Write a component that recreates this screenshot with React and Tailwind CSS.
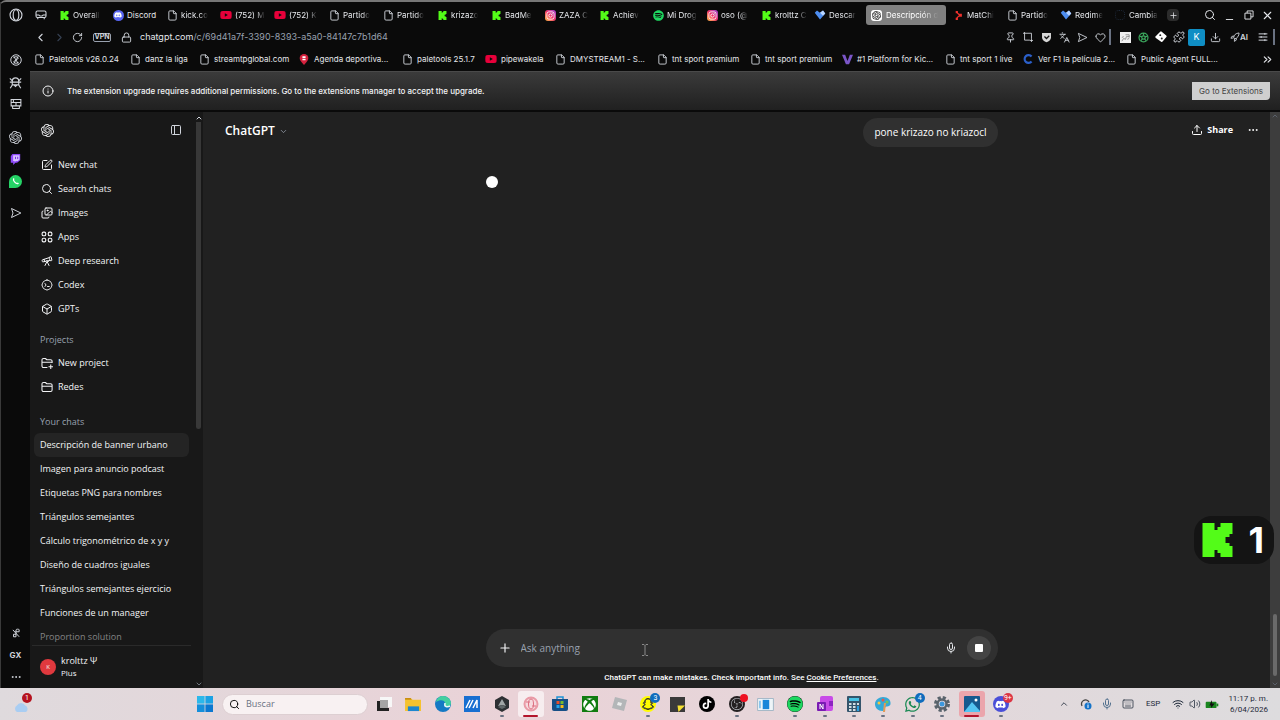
import React from "react";
import {
  Box,
  ChevronDown,
  ChevronLeft,
  ChevronRight,
  ChevronsRight,
  ChevronUp,
  Download,
  Ellipsis,
  File,
  Heart,
  Images,
  Info,
  Keyboard,
  Languages,
  Lock,
  Mic,
  Minus,
  PanelLeft,
  Pin,
  Plus,
  Puzzle,
  RotateCw,
  Search,
  SquarePen,
  Telescope,
  Upload,
  Volume2,
  Wifi,
  X,
} from "lucide-react";
import {
  FaDiscord,
  FaInstagram,
  FaSnapchat,
  FaSpotify,
  FaTiktok,
  FaWhatsapp,
  FaXbox,
  FaYoutube,
} from "react-icons/fa6";
import { SiObsstudio, SiOpenai } from "react-icons/si";

/* ---------- small drawings ---------- */

const KickMark = ({ className }) => (
  <svg viewBox="0 0 30 34" className={className} fill="#53fc18" aria-hidden="true">
    <path d="M0 0h12v7h3V4h3V0h12v11h-3v3h-4v6h4v3h3v11H18v-4h-3v-3h-3v7H0z" />
  </svg>
);

const OperaMark = ({ className }) => (
  <svg viewBox="0 0 16 16" className={className} fill="none" stroke="currentColor" aria-hidden="true">
    <circle cx="8" cy="8" r="6.8" strokeWidth="1.3" />
    <ellipse cx="8" cy="8" rx="3.2" ry="6" strokeWidth="1.3" />
  </svg>
);

const PlayTriangle = ({ className }) => (
  <svg viewBox="0 0 16 16" className={className} fill="none" stroke="currentColor" strokeWidth="1.3" strokeLinejoin="round" aria-hidden="true">
    <path d="M2 2l12.500 6L2 14l2-6z" />
  </svg>
);

const RocketIcon = ({ className }) => (
  <svg viewBox="0 0 16 16" className={className} fill="none" stroke="currentColor" strokeWidth="1.400" aria-hidden="true">
    <path d="M6 9c0-4 3-7 8.500-7.500C14.500 6 12 10 7.500 11zM6.500 6.500L3 7 1.500 10l4-.5M10 10v3l-3 2 .2-4" />
  </svg>
);

const RestoreIcon = ({ className }) => (
  <svg viewBox="0 0 16 16" className={className} fill="none" stroke="currentColor" strokeWidth="1.500" aria-hidden="true">
    <path d="M5 5V1.500h9.500V11H11M1.500 5H11v9.500H1.500z" />
  </svg>
);

const BlueDiamond = ({ className }) => (
  <svg viewBox="0 0 16 16" className={className} aria-hidden="true">
    <path d="M1 5l3-3 4 3 4-3 3 4-7 8z" fill="#4d8df0" />
    <path d="M8 5l4-3 3 4-3 3z" fill="#b9d5ff" />
  </svg>
);

const RedArrows = ({ className }) => (
  <svg viewBox="0 0 16 16" className={className} fill="#f0302c" aria-hidden="true">
    <path d="M3 0h4v4H3zM9 5h5v5H9zM3 12h4v4H3zM7 3l4 3-2 2-4-4zM10 9l-4 4-2-1 4-4z" />
  </svg>
);

const TwitchMark = ({ className }) => (
  <svg viewBox="0 0 14 14" className={className} aria-hidden="true">
    <path d="M3 0h10v8l-4 3H7l-3 3v-3H1V3z" fill="#8d49f7" />
    <path d="M4 1.500h8V7l-2 2H7.500L6 10.500V9H4z" fill="#d9c2ff" />
    <path d="M7 3.500v3M9.800 3.500v3" stroke="#6d2be0" strokeWidth="1.200" />
  </svg>
);

const RobotIcon = ({ className }) => (
  <svg viewBox="0 0 16 16" className={className} fill="none" stroke="currentColor" strokeWidth="1.4" aria-hidden="true">
    <path d="M4 6.500C4 1 12 1 12 6.500V11H4zM1 3l3 3M15 3l-3 3M1 7.500h14M4 11l-2.500 4M12 11l2.500 4M6 11l2 2 2-2" />
  </svg>
);

const PanelsIcon = ({ className }) => (
  <svg viewBox="0 0 16 16" className={className} fill="none" stroke="currentColor" strokeWidth="1.4" aria-hidden="true">
    <path d="M1.500 2h13v8.500h-13zM1.500 6h13M8 6v4.500M4.500 6V2M3 14h10M3.500 10.500V14M12.500 10.500V14" />
  </svg>
);

const SwirlIcon = ({ className }) => (
  <svg viewBox="0 0 16 16" className={className} fill="none" stroke="currentColor" strokeWidth="1.3" aria-hidden="true">
    <circle cx="8" cy="8" r="7" />
    <path d="M4.500 5.500C5 3 11 3 11 5.500c0 2-6 3-6 5 0 2.500 6 2.500 6.500 0M5 3l6 10M11 3L5 13" />
  </svg>
);

const ShortsIcon = ({ className }) => (
  <svg viewBox="0 0 16 16" className={className} fill="none" stroke="currentColor" strokeWidth="1.600" aria-hidden="true">
    <path d="M3 3l10 11M8 14V3c0-1 5-2 5 0v3H7M8 10H4v4h4" />
  </svg>
);

const TabsIcon = ({ className }) => (
  <svg viewBox="0 0 16 14" className={className} fill="none" stroke="currentColor" strokeWidth="1.500" aria-hidden="true">
    <rect x="1" y="1.500" width="14" height="9" rx="2" />
    <path d="M1 7h4l1.500 1.500h3L11 7h4M3.500 10.500V13M12.500 10.500V13" />
  </svg>
);

const AppsIcon = ({ className }) => (
  <svg viewBox="0 0 16 16" className={className} fill="none" stroke="currentColor" strokeWidth="1.500" aria-hidden="true">
    <rect x="1.500" y="1.500" width="4.800" height="4.800" rx="1.800" />
    <rect x="9.700" y="1.500" width="4.800" height="4.800" rx="1.800" />
    <rect x="1.500" y="9.700" width="4.800" height="4.800" rx="1.800" />
    <rect x="9.700" y="9.700" width="4.800" height="4.800" rx="1.800" />
  </svg>
);

const FolderIcon = ({ className }) => (
  <svg viewBox="0 0 16 16" className={className} fill="none" stroke="currentColor" strokeWidth="1.400" strokeLinejoin="round" aria-hidden="true">
    <path d="M1.300 12V4a2 2 0 0 1 2-2h2.500l2 1.700h5a2 2 0 0 1 2 2V12a2 2 0 0 1-2 2H3.300a2 2 0 0 1-2-2zM1.300 7h13.500" />
  </svg>
);

const NewFolderIcon = ({ className }) => (
  <svg viewBox="0 0 16 16" className={className} fill="none" stroke="currentColor" strokeWidth="1.400" strokeLinejoin="round" aria-hidden="true">
    <path d="M8.500 14H3.300a2 2 0 0 1-2-2V4a2 2 0 0 1 2-2h2.500l2 1.700h5a2 2 0 0 1 2 2V8M1.300 7h13.500M13 10v6M10 13h6" />
  </svg>
);

const CodexIcon = ({ className }) => (
  <svg viewBox="0 0 16 16" className={className} fill="none" stroke="currentColor" strokeWidth="1.300" strokeLinecap="round" aria-hidden="true">
    <path d="M8 1.300c1.300 0 2 .9 3 1.200 1.300.4 2.300 1.200 2.600 2.500.2 1 1.100 1.700 1.100 3s-.9 2-1.100 3c-.3 1.300-1.300 2.100-2.600 2.500-1 .3-1.700 1.200-3 1.200s-2-.9-3-1.200C3.700 13.100 2.700 12.300 2.400 11 2.200 10 1.300 9.300 1.300 8s.9-2 1.100-3C2.700 3.700 3.700 2.900 5 2.500c1-.3 1.700-1.200 3-1.200z" />
    <path d="M5.300 6l1.500 2-1.500 2M8.700 10h2.300" />
  </svg>
);

const SnapshotIcon = ({ className }) => (
  <svg viewBox="0 0 16 16" className={className} fill="none" stroke="currentColor" strokeWidth="1.400" aria-hidden="true">
    <path d="M0 2h13.500v9M2.500 0v13H11M13.500 11v5M11 13.500h5" />
  </svg>
);

const ShieldCheck = ({ className }) => (
  <svg viewBox="0 0 16 16" className={className} aria-hidden="true">
    <path d="M1.500 1.500h13V8c0 3.500-3 5.500-6.500 7C4.500 13.500 1.500 11.500 1.500 8z" fill="#d8d8d8" />
    <path d="M5 6.500l3 3 4-4" stroke="#111" strokeWidth="1.800" fill="none" />
  </svg>
);

const SetupIcon = ({ className }) => (
  <svg viewBox="0 0 16 16" className={className} fill="none" stroke="currentColor" strokeWidth="1.600" aria-hidden="true">
    <path d="M1 3h14M1 8h14M1 13h14M11 1.500v3M5 6.500v3M11 11.500v3" />
  </svg>
);

/* ---------- browser chrome ---------- */

const favicons = {
  kick: <KickMark className="size-[9px]" />,
  discord: (
    <span className="flex size-[11px] items-center justify-center rounded-full bg-[#5865f2]">
      <FaDiscord className="size-2 text-white" />
    </span>
  ),
  file: <File className="size-[11px] text-gray-300" />,
  youtube: <FaYoutube className="size-3 text-[#e8003a]" />,
  instagram: (
    <span className="flex size-[11px] items-center justify-center rounded-[3px] bg-linear-to-tr from-[#fdb73c] via-[#f0316b] to-[#9b36d6]">
      <FaInstagram className="size-[9px] text-white" />
    </span>
  ),
  spotify: <FaSpotify className="size-[11px] text-[#1ed760]" />,
  diamond: <BlueDiamond className="size-3" />,
  openai: (
    <span className="flex size-[11px] items-center justify-center rounded-[3px] bg-white">
      <SiOpenai className="size-[9px] text-black" />
    </span>
  ),
  red: <RedArrows className="size-[9px]" />,
  faint: <span className="size-[10px] rounded-sm border border-dotted border-gray-800" />,
  pin: (
    <svg viewBox="0 0 12 14" className="h-[11px] w-[10px]">
      <path d="M6 14C2 9.500.5 7.500.5 5a5.500 5 0 0 1 11 0c0 2.500-1.500 4.500-5.500 9z" fill="#d4213d" />
      <path d="M4 3h4v2H4zM4 6h4v2H4z" fill="#fff" />
    </svg>
  ),
  violet: (
    <svg viewBox="0 0 14 14" className="size-[11px]">
      <path d="M0 1h4l3 8 3-8h4L9 13H5z" fill="#7a55c7" />
    </svg>
  ),
  blueC: (
    <svg viewBox="0 0 14 14" className="size-[10px]" fill="none">
      <path d="M12 3.500A5.500 5.500 0 1 0 12 10.500" stroke="#2b5fc9" strokeWidth="3" />
    </svg>
  ),
};

const tabs = [
  { icon: "kick", title: "Overall" },
  { icon: "discord", title: "Discord", whole: true },
  { icon: "file", title: "kick.co" },
  { icon: "youtube", title: "(752) M" },
  { icon: "youtube", title: "(752) K" },
  { icon: "file", title: "Partido" },
  { icon: "file", title: "Partido" },
  { icon: "kick", title: "krizazo" },
  { icon: "kick", title: "BadMe" },
  { icon: "instagram", title: "ZAZA C" },
  { icon: "kick", title: "Achiev" },
  { icon: "spotify", title: "Mi Drog" },
  { icon: "instagram", title: "oso (@" },
  { icon: "kick", title: "krolttz C" },
  { icon: "diamond", title: "Descar" },
  { icon: "openai", title: "Descripción d", active: true },
  { icon: "red", title: "MatChi" },
  { icon: "file", title: "Partido" },
  { icon: "diamond", title: "Redime" },
  { icon: "faint", title: "Cambia" },
];

const bookmarks = [
  { icon: "file", title: "Paletools v26.0.24", width: "w-24" },
  { icon: "file", title: "danz la liga", width: "w-[69px]" },
  { icon: "file", title: "streamtpglobal.com", width: "w-[100px]" },
  { icon: "pin", title: "Agenda deportiva...", width: "w-[103px]" },
  { icon: "file", title: "paletools 25.1.7", width: "w-[84px]" },
  { icon: "youtube", title: "pipewakela", width: "w-[69px]" },
  { icon: "file", title: "DMYSTREAM1 - S...", width: "w-[102px]" },
  { icon: "file", title: "tnt sport premium", width: "w-[93px]" },
  { icon: "file", title: "tnt sport premium", width: "w-[92px]" },
  { icon: "violet", title: "#1 Platform for Kic...", width: "w-[103px]" },
  { icon: "file", title: "tnt sport 1 live", width: "w-[78px]" },
  { icon: "blueC", title: "Ver F1 la película 2...", width: "w-[103px]" },
  { icon: "file", title: "Public Agent FULL...", width: "w-[103px]" },
];

const IconButton = ({ label, className = "w-[18px]", children }) => (
  <button aria-label={label} className={`flex h-5 shrink-0 items-center justify-center ${className}`}>
    {children}
  </button>
);

const TabStrip = () => (
  <div className="flex h-[22px] items-center text-[8px] text-gray-200">
    <IconButton label="Workspace" className="w-[26px]">
      <TabsIcon className="mr-1 h-[10px] w-3 text-gray-300" />
    </IconButton>
    {tabs.map((tab, i) => (
      <button
        key={i}
        className={`flex h-5 items-center text-left ${
          tab.active ? "mr-1 w-20 gap-1 rounded-[3px] bg-[#808080] px-1 text-white" : "w-[54px] gap-[3px] pl-[2px]"
        }`}
      >
        <span className="flex w-3 shrink-0 items-center justify-center">{favicons[tab.icon]}</span>
        <span className={`whitespace-nowrap ${tab.whole ? "" : "mask-r-from-70%"}`}>{tab.title}</span>
      </button>
    ))}
    <IconButton label="New tab" className="w-[14px]">
      <span className="flex size-3 items-center justify-center rounded-sm bg-[#2c2c2c]">
        <Plus className="size-[9px]" />
      </span>
    </IconButton>
    <div className="ml-auto flex items-center pr-1">
      <IconButton label="Search tabs" className="w-5">
        <Search className="size-3" />
      </IconButton>
      <IconButton label="Minimize" className="w-[19px]">
        <Minus className="mt-2 size-[11px]" />
      </IconButton>
      <IconButton label="Restore" className="w-[19px]">
        <RestoreIcon className="size-[10px]" />
      </IconButton>
      <IconButton label="Close" className="w-[18px]">
        <X className="size-[13px]" />
      </IconButton>
    </div>
  </div>
);

const AddressBar = () => (
  <div className="flex h-[22px] items-center text-gray-300">
    <IconButton label="Back" className="w-5">
      <ChevronLeft className="size-[13px]" />
    </IconButton>
    <IconButton label="Forward">
      <ChevronRight className="size-[13px] text-gray-700" />
    </IconButton>
    <IconButton label="Reload">
      <RotateCw className="size-[11px]" />
    </IconButton>
    <span className="ml-[7px] flex h-[9px] w-[18px] items-center justify-center rounded-[2px] border border-gray-400 text-[7px] font-bold text-gray-300">
      VPN
    </span>
    <Lock className="mr-2 ml-[10px] size-[11px]" />
    <span className="text-[9px] text-gray-400">
      <span className="text-gray-200">chatgpt.com</span>/c/69d41a7f-3390-8393-a5a0-84147c7b1d64
    </span>
    <div className="ml-auto flex items-center">
      <IconButton label="Pin page">
        <Pin className="size-[11px]" />
      </IconButton>
      <IconButton label="Snapshot">
        <SnapshotIcon className="size-[10px]" />
      </IconButton>
      <IconButton label="Ad blocker">
        <ShieldCheck className="size-[11px]" />
      </IconButton>
      <IconButton label="Translate">
        <Languages className="size-[11px]" />
      </IconButton>
      <IconButton label="Player">
        <PlayTriangle className="size-[11px]" />
      </IconButton>
      <IconButton label="Favorites">
        <Heart className="size-[11px]" />
      </IconButton>
      <span className="mr-[5px] h-4 w-[2px] bg-gray-500" />
      <IconButton label="Image extension">
        <svg viewBox="0 0 12 12" className="size-[11px]">
          <path d="M0 0h12v12H0z" fill="#f1f1f1" />
          <path d="M2 10l2-3 2 1 1-3 3 0M6 3h4v3M2 6l2-1M8 8l2-1" stroke="#777" strokeWidth=".8" fill="none" />
        </svg>
      </IconButton>
      <IconButton label="Wheel extension">
        <svg viewBox="0 0 16 16" className="size-[11px]" fill="none" stroke="#3ba55c" strokeWidth="1.800">
          <circle cx="8" cy="8" r="6.500" />
          <circle cx="8" cy="8" r="2.500" />
          <path d="M8 1.500v4M14 6l-4 1M12 13l-2.500-3M4 13l2.500-3M2 6l4 1" />
        </svg>
      </IconButton>
      <IconButton label="Dice extension">
        <svg viewBox="0 0 16 16" className="size-3">
          <path d="M8 2l6 5-5 6-7-5z" fill="#fff" stroke="#fff" strokeWidth="3" strokeLinejoin="round" />
          <circle cx="7" cy="5.500" r="1.300" fill="#222" />
          <circle cx="9" cy="10" r="1.300" fill="#222" />
        </svg>
      </IconButton>
      <IconButton label="Extensions">
        <Puzzle className="size-3" />
      </IconButton>
      <button className="flex size-[17px] items-center justify-center rounded-[2px] bg-[#0f8ec4] text-[9px] text-white">
        K
      </button>
      <IconButton label="Downloads" className="w-5">
        <Download className="size-[11px]" />
      </IconButton>
      <button className="flex w-7 items-center justify-center text-[8px] leading-none font-semibold">
        <RocketIcon className="size-[10px]" />
        AI
      </button>
      <IconButton label="Easy setup" className="w-5">
        <SetupIcon className="size-[10px]" />
      </IconButton>
      <span className="mr-[5px] h-4 w-[2px] bg-gray-500" />
    </div>
  </div>
);

const BookmarksBar = () => (
  <nav className="flex h-[22px] items-center pr-[6px] text-[8px] text-gray-200">
    {bookmarks.map((b, i) => (
      <a key={i} href="#" className={`flex shrink-0 items-center gap-1 pl-[3px] whitespace-nowrap ${b.width}`}>
        <span className="flex w-3 shrink-0 justify-center">{favicons[b.icon]}</span>
        {b.title}
      </a>
    ))}
    <button aria-label="More bookmarks" className="ml-auto">
      <ChevronsRight className="size-[13px]" />
    </button>
  </nav>
);

const InfoBar = () => (
  <div className="mt-[1px] flex h-[39px] shrink-0 items-center border-t border-[#4a4a4a] bg-linear-to-b from-[#3b3b3b] to-[#202020] pr-[10px] pl-3 text-[8px] font-medium text-gray-100">
    <Info className="mr-[13px] size-3" />
    <span>
      The extension upgrade requires additional permissions. Go to the extensions manager to accept the upgrade.
    </span>
    <button className="ml-auto h-[18px] w-[78px] rounded-br-sm bg-[#cfcfcf] font-normal text-[#444]">
      Go to Extensions
    </button>
  </div>
);

const RailButton = ({ label, className = "", children }) => (
  <button aria-label={label} className={`flex h-[22px] w-full shrink-0 items-center justify-center ${className}`}>
    {children}
  </button>
);

const Rail = () => (
  <aside className="flex w-[30px] shrink-0 flex-col border-l border-[#3a3a3a] pt-[2px] text-gray-300">
    <RailButton label="Opera menu" className="mb-[23px]">
      <OperaMark className="size-[14px]" />
    </RailButton>
    <RailButton label="Aria">
      <SwirlIcon className="size-3" />
    </RailButton>
    <RailButton label="Mods">
      <RobotIcon className="size-[13px]" />
    </RailButton>
    <RailButton label="Panels" className="mb-[11px]">
      <PanelsIcon className="size-3" />
    </RailButton>
    <RailButton label="ChatGPT">
      <SiOpenai className="size-[13px]" />
    </RailButton>
    <RailButton label="Twitch">
      <TwitchMark className="size-[11px]" />
    </RailButton>
    <RailButton label="WhatsApp" className="mb-[10px]">
      <span className="flex size-[13px] items-center justify-center rounded-full rounded-bl-sm bg-[#25d366]">
        <svg viewBox="0 0 12 12" className="size-[9px]" fill="none" stroke="#fff" strokeWidth="1.800" strokeLinecap="round">
          <path d="M3.500 2.500C2.500 5 6.500 9.500 9.500 8.500" />
        </svg>
      </span>
    </RailButton>
    <RailButton label="Player">
      <PlayTriangle className="size-3" />
    </RailButton>
    <RailButton label="Shorts" className="mt-auto">
      <ShortsIcon className="size-[10px]" />
    </RailButton>
    <RailButton label="GX" className="text-[8px] font-bold">
      GX
    </RailButton>
    <RailButton label="More">
      <Ellipsis className="size-3" />
    </RailButton>
  </aside>
);

/* ---------- ChatGPT page ---------- */

const navItems = [
  { icon: SquarePen, label: "New chat" },
  { icon: Search, label: "Search chats" },
  { icon: Images, label: "Images" },
  { icon: AppsIcon, label: "Apps" },
  { icon: Telescope, label: "Deep research" },
  { icon: CodexIcon, label: "Codex" },
  { icon: Box, label: "GPTs" },
];

const projects = [
  { icon: NewFolderIcon, label: "New project" },
  { icon: FolderIcon, label: "Redes" },
];

const chats = [
  "Descripción de banner urbano",
  "Imagen para anuncio podcast",
  "Etiquetas PNG para nombres",
  "Triángulos semejantes",
  "Cálculo trigonométrico de x y y",
  "Diseño de cuadros iguales",
  "Triángulos semejantes ejercicio",
  "Funciones de un manager",
  "Proportion solution",
];

const NavLink = ({ icon: Icon, label }) => (
  <a href="#" className="flex h-6 items-center gap-[5px] pl-[11px]">
    <Icon className="size-3" />
    {label}
  </a>
);

const Sidebar = () => (
  <aside className="flex w-[173px] shrink-0 bg-[#181818] font-['Open_Sans','Noto_Sans',sans-serif] text-[9px] font-medium text-gray-100">
    <div className="flex min-w-0 flex-1 flex-col">
      <div className="mb-[5px] flex h-9 shrink-0 items-center justify-between pr-3 pl-[11px]">
        <SiOpenai className="size-[13px]" />
        <button aria-label="Close sidebar">
          <PanelLeft className="size-3 text-gray-300" />
        </button>
      </div>
      <div className="min-h-0 flex-1 overflow-hidden">
        <nav>
          {navItems.map((item) => (
            <NavLink key={item.label} {...item} />
          ))}
        </nav>
        <h2 className="mt-2 flex h-[22px] items-center pl-[10px] text-gray-400">Projects</h2>
        {projects.map((item) => (
          <NavLink key={item.label} {...item} />
        ))}
        <h2 className="mt-3 flex h-[22px] items-center pl-[10px] text-gray-400">Your chats</h2>
        {chats.map((chat, i) => (
          <a
            key={chat}
            href="#"
            className={`mr-[5px] ml-1 flex h-6 items-center rounded-md pl-[6px] whitespace-nowrap ${
              i === 0 ? "bg-[#242424]" : ""
            } ${i === chats.length - 1 ? "text-[#858585]" : ""}`}
          >
            {chat}
          </a>
        ))}
      </div>
      <button className="mr-[3px] ml-[2px] flex h-[43px] shrink-0 items-center gap-[5px] border-t border-[#2a2a2a] pl-2 text-left">
        <span className="flex size-4 items-center justify-center rounded-full bg-[#e0393e] text-[6px]">K</span>
        <span className="leading-3">
          krolttz Ψ
          <span className="block text-[8px]">Plus</span>
        </span>
      </button>
    </div>
    <div className="flex w-[9px] flex-col items-center justify-between text-gray-300">
      <ChevronUp className="mt-[2px] size-2 shrink-0" strokeWidth={3} />
      <div className="w-[5px] flex-1">
        <div className="h-[55%] rounded-b-sm bg-[#383838]" />
      </div>
      <ChevronDown className="size-2 shrink-0 text-gray-400" />
    </div>
  </aside>
);

const Composer = () => (
  <form className="flex h-[38px] items-center rounded-full bg-[#303030] pr-[7px] pl-3" onSubmit={(e) => e.preventDefault()}>
    <button type="button" aria-label="Add files" className="mr-[9px]">
      <Plus className="size-[14px] text-gray-100" />
    </button>
    <input
      aria-label="Ask anything"
      placeholder="Ask anything"
      className="min-w-0 flex-1 text-[10px] outline-none placeholder:text-gray-400"
    />
    <button type="button" aria-label="Dictate" className="mr-[10px]">
      <Mic className="size-3 text-gray-200" />
    </button>
    <button type="button" aria-label="Stop" className="flex size-6 items-center justify-center rounded-full bg-[#444]">
      <span className="size-2 rounded-[1px] bg-white" />
    </button>
  </form>
);

const Chat = () => (
  <main className="relative flex min-w-0 flex-1 bg-[#212121] font-['Open_Sans','Noto_Sans',sans-serif] text-white">
    <div className="flex min-w-0 flex-1 flex-col pl-[10px]">
      <div className="grid grid-cols-[1fr_512px_1fr] items-start">
        <button className="flex h-[38px] items-center gap-1 pl-3 text-[12px] font-semibold">
          ChatGPT
          <ChevronDown className="size-[9px] text-gray-400" />
        </button>
        <div className="mt-[6px] flex justify-end">
          <p className="flex h-[29px] items-center rounded-full bg-[#303030] px-[11px] text-[10px] whitespace-nowrap">
            pone krizazo no kriazocl
          </p>
        </div>
        <div className="flex h-9 items-center justify-end gap-[14px] pr-[11px]">
          <button className="flex items-center gap-1 text-[9px] font-bold">
            <Upload className="size-3" />
            Share
          </button>
          <button aria-label="More options">
            <Ellipsis className="size-3" />
          </button>
        </div>
      </div>
      <div className="mx-auto flex w-[512px] flex-1 flex-col">
        <span className="mt-[26px] size-3 rounded-full bg-white" />
        <div className="mt-auto">
          <Composer />
          <p className="flex h-[21px] items-center justify-center font-['Roboto',sans-serif] text-[8px] font-medium whitespace-pre">
            ChatGPT can make mistakes. Check important info. See{" "}
            <a href="#" className="underline">Cookie Preferences</a>.
          </p>
        </div>
      </div>
    </div>
    <div className="flex w-[10px] flex-col items-center justify-between bg-[#3d3d3d] text-gray-500">
      <ChevronUp className="size-2 shrink-0" />
      <div className="flex w-1 flex-1 flex-col justify-end">
        <div className="mb-1 h-[62px] rounded-sm bg-[#6a6a6a]" />
      </div>
      <ChevronDown className="size-2 shrink-0" />
    </div>

    {/* viewer counter floating over the page */}
    <div className="absolute right-[6px] bottom-[124px] flex h-12 w-20 items-center justify-between rounded-[18px] bg-[#141414] pr-[10px] pl-2 font-['Inter',sans-serif] text-[36px] leading-none font-bold">
      <KickMark className="h-[34px] w-[31px]" />
      1
    </div>

    {/* text pointer */}
    <svg viewBox="0 0 8 12" className="absolute bottom-[32px] left-[438px] h-3 w-2" fill="none" stroke="#8a8a8a" aria-hidden="true">
      <path d="M1 .5h2l1 1 1-1h2M4 1.500v9M1 11.500h2l1-1 1 1h2" />
    </svg>
  </main>
);

/* ---------- Windows taskbar ---------- */

const WindowsLogo = () => (
  <svg viewBox="0 0 16 16" className="size-4">
    <path d="M0 0h7.600v7.600H0z" fill="#2cb8ea" />
    <path d="M8.400 0H16v7.600H8.400z" fill="#1ba2e4" />
    <path d="M0 8.400h7.600V16H0z" fill="#148fdb" />
    <path d="M8.400 8.400H16V16H8.400z" fill="#0b78d0" />
  </svg>
);

const taskIcons = [
  {
    name: "Task view",
    icon: (
      <svg viewBox="0 0 16 16" className="size-4">
        <path d="M4 1h12v10H4z" fill="#f7f7f7" />
        <path d="M1 5h3v7h9v3H1z" fill="#222" />
        <path d="M4 4h8v8H4z" fill="#a5a5a5" />
      </svg>
    ),
  },
  {
    name: "File Explorer",
    icon: (
      <svg viewBox="0 0 18 16" className="h-[15px] w-[17px]">
        <path d="M0 1h6l2 2h9v12H0z" fill="#f5c22f" />
        <path d="M0 1h6l1 2H0z" fill="#c98f12" />
        <path d="M3 10h12v5H3z" fill="#1d86cf" />
      </svg>
    ),
  },
  {
    name: "Edge",
    icon: (
      <svg viewBox="0 0 16 16" className="size-4">
        <circle cx="8" cy="8" r="8" fill="#1479c4" />
        <path d="M1 6C2 1 6 0 8 0c5 0 8 4 8 7 0 3-3 4-5 3-2 0-1-2-1-3 0-3-5-4-9-1z" fill="#43cfa0" />
        <path d="M10 7c0 1-1 3 1 3.500 2 .5 3 0 4-.5" stroke="#e8f7f8" strokeWidth="1.500" fill="none" />
      </svg>
    ),
  },
  {
    name: "MyASUS",
    icon: (
      <svg viewBox="0 0 16 16" className="size-4">
        <path d="M0 0h16v16H0z" fill="#176fd1" />
        <path d="M2 12l4-8M5 12l4-8M9 12l4-8v8" stroke="#fff" strokeWidth="1.500" fill="none" />
      </svg>
    ),
  },
  {
    name: "Armoury Crate",
    running: true,
    icon: (
      <svg viewBox="0 0 16 16" className="size-4">
        <path d="M8 0l7 4v8l-7 4-7-4V4z" fill="#2d3033" />
        <path d="M8 3l4 7-4-1-4 1z" fill="#9fa5a6" />
        <path d="M4 11l4-2 4 2-4 2z" fill="#5f6668" />
      </svg>
    ),
  },
  {
    name: "Opera GX",
    focused: "bg-white/60",
    icon: (
      <svg viewBox="0 0 16 16" className="size-4" fill="none">
        <circle cx="8" cy="8" r="6.500" fill="#f7d9de" stroke="#e99aa6" strokeWidth="2" />
        <ellipse cx="8" cy="8" rx="2.500" ry="5" stroke="#dd6f80" />
        <path d="M3 6h4M9 10h4" stroke="#dd6f80" />
      </svg>
    ),
  },
  {
    name: "Microsoft Store",
    icon: (
      <svg viewBox="0 0 16 16" className="size-4">
        <path d="M5 4V1h6v3" stroke="#1c93d6" strokeWidth="1.500" fill="none" />
        <path d="M0 3h16v10a2 2 0 0 1-2 2H2a2 2 0 0 1-2-2z" fill="#164f86" />
        <path d="M4.500 5h3v3h-3z" fill="#e84f2b" />
        <path d="M8.500 5h3v3h-3z" fill="#79b92c" />
        <path d="M4.500 9h3v3h-3z" fill="#22a6ed" />
        <path d="M8.500 9h3v3h-3z" fill="#f8bb17" />
      </svg>
    ),
  },
  {
    name: "Xbox",
    icon: (
      <span className="flex size-4 items-center justify-center bg-[#107c10]">
        <FaXbox className="size-[13px] text-white" />
      </span>
    ),
  },
  {
    name: "Roblox",
    icon: (
      <svg viewBox="0 0 16 16" className="size-4">
        <path d="M4 1l12 3-3 11L1 12z" fill="#b3b6b8" />
        <path d="M7 6l4 1-1 3-4-1z" fill="#eceded" />
      </svg>
    ),
  },
  {
    name: "Snapchat",
    running: true,
    badge: "3",
    icon: (
      <span className="flex size-4 items-center justify-center rounded-full bg-[#fffc00]">
        <FaSnapchat className="size-3 text-white [stroke:#000] [stroke-width:30]" />
      </span>
    ),
  },
  {
    name: "Sticky Notes",
    icon: (
      <svg viewBox="0 0 16 16" className="size-[15px]">
        <path d="M0 0h16v16H0z" fill="#3a3a3a" />
        <path d="M8 9h8l-7 7z" fill="#f6e132" />
      </svg>
    ),
  },
  {
    name: "TikTok",
    icon: (
      <span className="flex size-4 items-center justify-center rounded-full bg-black">
        <FaTiktok className="size-[10px] text-white" />
      </span>
    ),
  },
  {
    name: "OBS Studio",
    running: true,
    dot: true,
    icon: (
      <span className="flex size-4 items-center justify-center rounded-full bg-[#231f20]">
        <SiObsstudio className="size-3 text-gray-300" />
      </span>
    ),
  },
  {
    name: "Emulator",
    icon: (
      <svg viewBox="0 0 18 14" className="h-[13px] w-[17px]">
        <path d="M.5.5h17v13H.5z" fill="#eef4f8" stroke="#9eb3c2" />
        <path d="M6 2h7v10H6z" fill="#1a86d9" />
        <path d="M2 3h2v8H2z" fill="#8bc6ee" />
      </svg>
    ),
  },
  {
    name: "Spotify",
    running: true,
    icon: (
      <span className="rounded-full bg-black">
        <FaSpotify className="size-4 text-[#1ed760]" />
      </span>
    ),
  },
  {
    name: "OneNote",
    running: true,
    icon: (
      <svg viewBox="0 0 16 16" className="size-4">
        <rect x="3" y="0" width="13" height="15" rx="2" fill="#c84be8" />
        <path d="M12 5h4v5h-4z" fill="#8d24c2" />
        <rect x="0" y="6" width="9" height="9" rx="1" fill="#7a1bb3" />
        <path d="M3 13V8l3 5V8" stroke="#fff" fill="none" />
      </svg>
    ),
  },
  {
    name: "Calculator",
    running: true,
    icon: (
      <svg viewBox="0 0 14 16" className="h-4 w-[14px]">
        <rect width="14" height="16" rx="1" fill="#35556c" />
        <path d="M2 2h10v3H2z" fill="#48c3e5" />
        <path d="M2 7h2.500v2H2zM6 7h2.500v2H6zM2 10h2.500v2H2zM6 10h2.500v2H6zM2 13h2.500v2H2zM6 13h2.500v2H6zM10 7h2v2h-2z" fill="#d3dde3" />
        <path d="M10 10h2v5h-2z" fill="#2a9fe0" />
      </svg>
    ),
  },
  {
    name: "Paint",
    running: true,
    icon: (
      <svg viewBox="0 0 16 16" className="size-4">
        <path d="M8 1c5 0 8 3 7.500 7-.5 3-4 2-5 3s0 4-3 4C3 15 0 12 0 8s4-7 8-7z" fill="#34a9d8" />
        <circle cx="4" cy="7" r="1.500" fill="#f3c73c" />
        <circle cx="8" cy="4" r="1.500" fill="#e45a4a" />
        <circle cx="12" cy="6" r="1.500" fill="#74c35b" />
        <path d="M9 7l2 0-1 9H8z" fill="#e39a56" />
      </svg>
    ),
  },
  { name: "WhatsApp", running: true, badge: "4", icon: <FaWhatsapp className="size-[17px] text-[#1b8a55]" /> },
  {
    name: "Settings",
    running: true,
    icon: (
      <svg viewBox="0 0 16 16" className="size-4" fill="none">
        <circle cx="8" cy="8" r="6.500" stroke="#59636c" strokeWidth="3" strokeDasharray="3.100 2" />
        <circle cx="8" cy="8" r="4.500" stroke="#59636c" strokeWidth="2.500" />
        <circle cx="8" cy="8" r="2.500" fill="#3b97dd" />
      </svg>
    ),
  },
  {
    name: "Photos",
    focused: "bg-[#eba5ac]",
    icon: (
      <svg viewBox="0 0 16 16" className="size-4">
        <rect width="16" height="16" rx="1" fill="#17598f" />
        <path d="M0 16L8 6l8 9v1z" fill="#54c4f2" />
        <circle cx="12" cy="4" r="1.500" fill="#fff" />
      </svg>
    ),
  },
  {
    name: "Discord",
    running: true,
    badge: "9+",
    badgeColor: "bg-[#dc3545]",
    icon: (
      <span className="flex size-4 items-center justify-center rounded-full bg-[#4a4fd8]">
        <FaDiscord className="size-[11px] text-white" />
      </span>
    ),
  },
];

const TaskButton = ({ name, icon, running, focused, badge, badgeColor = "bg-[#0f6cbd]", dot }) => (
  <button
    aria-label={name}
    className={`relative flex h-[26px] w-[26px] items-center justify-center rounded-[3px] ${focused || ""}`}
  >
    {icon}
    {running && <span className="absolute bottom-0 h-[2px] w-1 rounded-full bg-gray-500" />}
    {focused && <span className="absolute bottom-0 h-[2px] w-[15px] rounded-full bg-[#b3152c]" />}
    {badge && (
      <span className={`absolute top-[2px] right-[1px] flex size-[10px] items-center justify-center rounded-full text-[7px] leading-none text-white ${badgeColor}`}>
        {badge}
      </span>
    )}
    {dot && <span className="absolute top-[3px] right-[2px] size-2 rounded-full bg-[#ee1122]" />}
  </button>
);

const Taskbar = () => (
  <footer className="flex h-8 shrink-0 items-center bg-linear-to-r from-[#dfdadd] via-[#ead2d7] via-40% to-[#dddcde] font-['Roboto',sans-serif] text-[9px] text-gray-800">
    <button aria-label="Weather" className="relative mr-[164px] ml-[13px] flex h-6 w-5 items-center">
      <svg viewBox="0 0 18 12" className="mt-1 h-[11px] w-[17px]">
        <path d="M4 12a4 4 0 0 1 0-7 5 5 0 0 1 9 0 4 4 0 0 1 1 7z" fill="#a9cdf2" />
      </svg>
      <span className="absolute top-[1px] right-[1px] flex size-[10px] items-center justify-center rounded-full bg-[#b5121f] text-[7px] text-white">
        1
      </span>
    </button>
    <button aria-label="Start" className="mr-[9px]">
      <WindowsLogo />
    </button>
    <label className="flex h-[21px] w-[146px] items-center gap-[6px] rounded-full border border-[#ddcfd2] bg-[#f8f1f2] pl-[6px] font-['Open_Sans','Noto_Sans',sans-serif]">
      <Search className="size-[11px] text-black" />
      <input aria-label="Buscar" placeholder="Buscar" className="w-24 outline-none placeholder:text-gray-500" />
    </label>
    <div className="ml-[3px] flex w-[643px] justify-between">
      {taskIcons.map((item) => (
        <TaskButton key={item.name} {...item} />
      ))}
    </div>
    <div className="ml-auto flex items-center pr-3">
      <ChevronUp className="mr-[11px] size-[10px]" />
      <svg viewBox="0 0 12 12" className="mr-[9px] size-3" fill="none">
        <path d="M2 8a4 4 0 1 1 7-4" stroke="#444" strokeWidth="1.300" />
        <circle cx="8" cy="8" r="3.500" fill="#1473c9" />
        <path d="M8 7v3M8 5.500v1" stroke="#fff" />
      </svg>
      <Mic className="mr-[9px] size-3 text-[#52708e]" />
      <Keyboard className="mr-3 size-3" strokeWidth={1.5} />
      <span className="mr-3 text-[8px]">ESP</span>
      <Wifi className="mr-[5px] size-3" />
      <Volume2 className="mr-1 size-3" strokeWidth={1.5} />
      <svg viewBox="0 0 14 10" className="mr-[9px] h-[9px] w-[14px]">
        <rect x="0" y="2" width="12" height="7" rx="1" fill="#19851f" />
        <path d="M12 4h2v3h-2z" fill="#19851f" />
        <path d="M7 0L4 6h2v3l4-5H7z" fill="#111" />
      </svg>
      <span className="text-right text-[8px] leading-[11px] whitespace-nowrap">
        11:17 p. m.
        <br />
        6/04/2026
      </span>
    </div>
  </footer>
);

const App = () => {
  return (
    <div className="flex h-screen flex-col overflow-hidden bg-[#0a0a0a] font-['Inter',sans-serif]">
      <div className="flex min-h-0 flex-1 rounded-tl-md border-t-2 border-[#777]">
        <Rail />
        <div className="flex min-w-0 flex-1 flex-col">
          <div className="shrink-0 pt-[2px]">
            <TabStrip />
            <AddressBar />
            <BookmarksBar />
          </div>
          <InfoBar />
          <div className="mt-[2px] flex min-h-0 flex-1">
            <Sidebar />
            <Chat />
          </div>
        </div>
      </div>
      <Taskbar />
    </div>
  );
};

export default App;
